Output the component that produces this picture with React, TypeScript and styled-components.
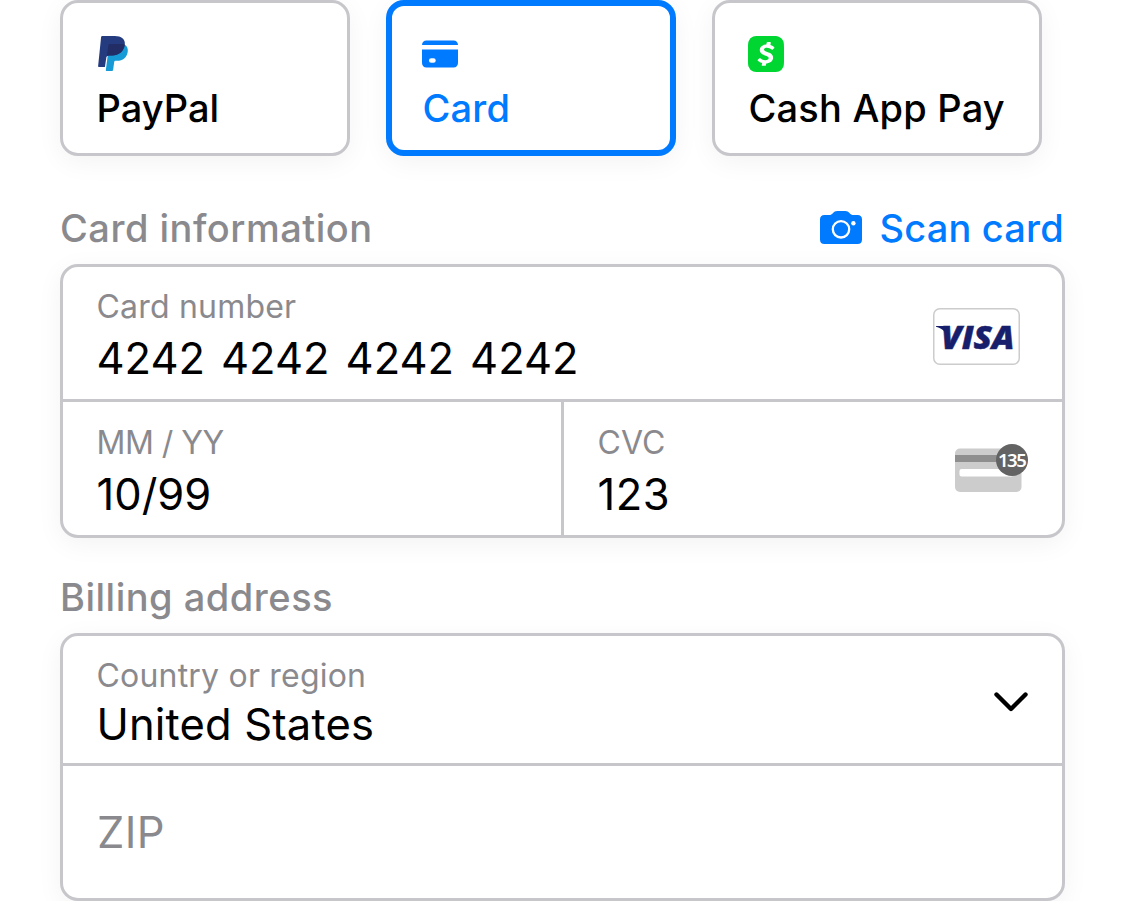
import React from "react";
import styled, { createGlobalStyle } from "styled-components";
import { SiCashapp } from "react-icons/si";

const GlobalStyle = createGlobalStyle`
  *, *::before, *::after { box-sizing: border-box; }
  body { margin: 0; background: #fff; overflow: hidden; font-family: Inter, sans-serif; color: #000; }
  svg { display: block; flex: none; }
`;

const Page = styled.main`
  display: flex;
  flex-direction: column;
  width: 1125px;
  height: 901px;
  padding: 0 60px;
`;

const Methods = styled.div`
  display: flex;
  gap: 36px;
`;

const Method = styled.button<{ $active?: boolean; $width?: number }>`
  display: flex;
  flex-direction: column;
  align-items: flex-start;
  width: ${(p) => p.$width ?? 290}px;
  height: 156px;
  padding: ${(p) => (p.$active ? "30px" : "33px")};
  border: ${(p) => (p.$active ? "6px solid #007aff" : "3px solid #c7c6cb")};
  border-radius: 18px;
  background: #fff;
  color: ${(p) => (p.$active ? "#007aff" : "#000")};
  font-family: inherit;
  box-shadow: 0 6px 27px rgba(0, 0, 0, 0.05);
`;

const MethodName = styled.span<{ $spacing?: number }>`
  margin-top: 12px;
  padding-left: 0.5px;
  font-size: 38px;
  font-weight: 480;
  line-height: 48px;
  letter-spacing: ${(p) => p.$spacing ?? 0.2}px;
  white-space: nowrap;
`;

const SectionHeader = styled.header<{ $top: number }>`
  display: flex;
  justify-content: space-between;
  align-items: center;
  height: 48px;
  margin: ${(p) => p.$top}px 0 12px;
`;

const SectionTitle = styled.h2`
  margin: 0;
  color: #8a8a8e;
  font-size: 38px;
  font-weight: 480;
  line-height: 48px;
  letter-spacing: 0.5px;
`;

const ScanButton = styled.button`
  display: flex;
  align-items: center;
  gap: 17px;
  padding: 0 1px 0 0;
  border: 0;
  background: none;
  color: #007aff;
  font: 480 38px/48px Inter, sans-serif;
  letter-spacing: 0.2px;
  white-space: nowrap;

  svg { margin-bottom: 1px; }
`;

const Panel = styled.section`
  display: flex;
  flex-direction: column;
  width: 1005px;
  border: 3px solid #c7c6cb;
  border-radius: 18px;
  background: #fff;
  box-shadow: 0 6px 27px rgba(0, 0, 0, 0.05);
`;

const Row = styled.div<{ $height: number }>`
  display: flex;
  height: ${(p) => p.$height}px;
  & + & { border-top: 3px solid #c7c6cb; }
`;

const Field = styled.div<{ $end?: number }>`
  display: flex;
  flex: 1;
  align-items: center;
  justify-content: space-between;
  padding: 0 ${(p) => p.$end ?? 34}px 0 34px;
  & + & { border-left: 3px solid #c7c6cb; }
`;

const FieldText = styled.div<{ $top?: number }>`
  display: flex;
  flex-direction: column;
  margin-left: -0.5px;
  padding-top: ${(p) => p.$top ?? 6}px;
`;

const Label = styled.span<{ $spacing?: number }>`
  color: #8a8a8e;
  font-size: 32px;
  line-height: 40px;
  letter-spacing: ${(p) => p.$spacing ?? 0.2}px;
`;

const Value = styled.span<{ $spacing?: number; $gap?: number }>`
  margin-top: ${(p) => p.$gap ?? 5}px;
  font-size: 43.5px;
  line-height: 52px;
  letter-spacing: ${(p) => p.$spacing ?? 0}px;
`;

const CardNumber = styled(Value)`
  word-spacing: 3.7px;
`;

const Placeholder = styled(Value)`
  margin-top: 0;
  color: #8a8a8e;
`;

const Adornment = styled.span<{ $top?: number; $bottom?: number }>`
  padding: ${(p) => p.$top ?? 0}px 0 ${(p) => p.$bottom ?? 0}px;
`;

const PayPalIcon = () => (
  <svg width="36" height="36" viewBox="0 0 36 36">
    <path fill="#179bd7" d="M28.800 8.800C31.200 10.300 32.300 13 31.700 16c-1 5.800-4.700 8.800-10.700 8.800h-1.600q-1 0-1.200 1.100L17.100 34q-.2 1-1.200 1h-5.400q-.8 0-.7-.8L11.800 19l8.400-3z" />
    <path fill="#253b80" d="M5.100.9Q5.300 0 6.200 0h12.600C25.200 0 29.600 3 28.800 8.800 27.500 15.800 22.500 19.400 16 19.400h-3.200q-2 0-2.400 1.700L8.900 31H2.800q-.8 0-.7-.7z" />
    <path fill="#222d65" d="M12.500 8.500q.2-.5.8-.5h13.100q1.400.2 2.400.8c-1 7-6 10.600-12.500 10.600h-3.700q-1.200 0-1.800.8z" />
  </svg>
);

const CardIcon = () => (
  <svg width="36" height="36" viewBox="0 0 36 36" fill="#007aff">
    <path d="M0 9c0-2.700 1.800-4.500 4.500-4.500h27C34.200 4.500 36 6.300 36 9z" />
    <path fillRule="evenodd" d="M0 13.500h36v13.500c0 2.700-1.800 4.500-4.500 4.500h-27C1.800 31.500 0 29.700 0 27zM9.200 22.200a2.250 2.250 0 0 0 0 4.500h2.300a2.250 2.250 0 0 0 0-4.500z" />
  </svg>
);

const CameraIcon = () => (
  <svg width="42" height="33" viewBox="0 1 42 33" preserveAspectRatio="none">
    <path fill="#007aff" d="M4.500 5H9c2 0 2.700-.6 3.800-1.800C14.200 1.700 15.300 1 17.300 1h7.900c2 0 3.100.7 4.500 2.200C30.800 4.400 31.500 5 33.500 5h4C40.500 5 42 6.500 42 9.500v20c0 3-1.500 4.500-4.500 4.500h-33C1.500 34 0 32.500 0 29.500v-20C0 6.500 1.500 5 4.500 5z" />
    <circle cx="21" cy="19.300" r="8.200" fill="none" stroke="#fff" strokeWidth="2.300" />
    <circle cx="33.400" cy="13.200" r="2.200" fill="#fff" />
  </svg>
);

const VisaIcon = () => (
  <svg width="87" height="57" viewBox="0 0 87 57">
    <rect x=".75" y=".75" width="85.500" height="55.500" rx="6" fill="#fff" stroke="#ccc" strokeWidth="1.500" />
    <path fill="#171e6c" d="M3 18h8c2 0 3 .8 3.400 2.500L16.500 32C14 24.500 9.500 20.500 3 18.700z" />
    <text x="8" y="40.800" textLength="73.500" lengthAdjust="spacingAndGlyphs" fill="#171e6c" stroke="#171e6c" strokeWidth=".5" fontFamily="Open Sans" fontStyle="italic" fontWeight="800" fontSize="31.500">VISA</text>
  </svg>
);

const CvcIcon = () => (
  <svg width="73" height="48" viewBox="0 0 73 48">
    <rect x="0" y="4.500" width="66.500" height="43.500" rx="5" fill="#ccc" />
    <rect x="0" y="11" width="66.500" height="7" fill="#8e8e8e" />
    <rect x="4.500" y="25" width="54" height="7.500" rx="2" fill="#fff" />
    <circle cx="57" cy="16" r="16" fill="#636363" />
    <text x="43" y="22.800" fill="#fff" fontFamily="Noto Sans" fontWeight="600" fontSize="18.500" letterSpacing="-1.500">135</text>
  </svg>
);

const ChevronIcon = () => (
  <svg width="34" height="20" viewBox="0 0 34 20">
    <path d="M2.500 2.500 17 17 31.500 2.500" fill="none" stroke="#000" strokeWidth="4.400" strokeLinecap="round" strokeLinejoin="round" />
  </svg>
);

export default function App() {
  return (
    <>
      <GlobalStyle />
      <Page>
        <Methods>
          <Method>
            <PayPalIcon />
            <MethodName $spacing={0}>PayPal</MethodName>
          </Method>
          <Method $active>
            <CardIcon />
            <MethodName>Card</MethodName>
          </Method>
          <Method $width={330}>
            <SiCashapp size={36} color="#00d632" />
            <MethodName>Cash App Pay</MethodName>
          </Method>
        </Methods>

        <SectionHeader $top={48}>
          <SectionTitle>Card information</SectionTitle>
          <ScanButton>
            <CameraIcon />
            Scan card
          </ScanButton>
        </SectionHeader>
        <Panel>
          <Row $height={132}>
            <Field $end={42}>
              <FieldText $top={4}>
                <Label>Card number</Label>
                <CardNumber>4242 4242 4242 4242</CardNumber>
              </FieldText>
              <Adornment $top={6}>
                <VisaIcon />
              </Adornment>
            </Field>
          </Row>
          <Row $height={136}>
            <Field>
              <FieldText>
                <Label $spacing={-0.5}>MM / YY</Label>
                <Value>10/99</Value>
              </FieldText>
            </Field>
            <Field>
              <FieldText>
                <Label $spacing={0}>CVC</Label>
                <Value $spacing={0.5}>123</Value>
              </FieldText>
              <Adornment $bottom={2}>
                <CvcIcon />
              </Adornment>
            </Field>
          </Row>
        </Panel>

        <SectionHeader $top={35}>
          <SectionTitle>Billing address</SectionTitle>
        </SectionHeader>
        <Panel>
          <Row $height={127}>
            <Field>
              <FieldText>
                <Label>Country or region</Label>
                <Value $gap={2} $spacing={0.15}>United States</Value>
              </FieldText>
              <Adornment $top={4}>
                <ChevronIcon />
              </Adornment>
            </Field>
          </Row>
          <Row $height={135}>
            <Field>
              <Placeholder $spacing={0.3}>ZIP</Placeholder>
            </Field>
          </Row>
        </Panel>
      </Page>
    </>
  );
}
